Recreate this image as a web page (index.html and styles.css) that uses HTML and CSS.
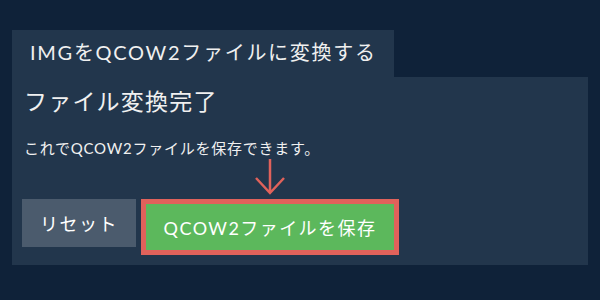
FILE: index.html
```html
<!DOCTYPE html>
<html lang="ja">
<head>
    <meta charset="utf-8">
    <title>IMGをQCOW2ファイルに変換する</title>
    <link rel="stylesheet" href="styles.css">
</head>
<body>
    <div class="converter">
        <div class="tab">IMGをQCOW2ファイルに変換する</div>
        <div class="panel">
            <h2 class="title">ファイル変換完了</h2>
            <p class="message">これでQCOW2ファイルを保存できます。</p>
            <div class="actions">
                <button class="btn reset">リセット</button>
                <div class="save-wrap">
                    <svg class="arrow" width="30" height="38" viewBox="0 0 30 38">
                        <path d="M15 1 V35 M1 20 L15 35 L29 20" fill="none" stroke="#e0625b" stroke-width="2.5"/>
                    </svg>
                    <button class="btn save">QCOW2ファイルを保存</button>
                </div>
            </div>
        </div>
    </div>
</body>
</html>
```

FILE: styles.css
```css
* {
    margin: 0;
    padding: 0;
    box-sizing: border-box;
}

body {
    background-color: #0f2239;
    color: #f0f0f0;
    font-family: Lato, "Noto Sans CJK JP", sans-serif;
    letter-spacing: 0.075em;
    padding: 30px 12px;
}

.tab {
    display: inline-block;
    background-color: #22364c;
    font-size: 20px;
    line-height: 28px;
    letter-spacing: 0.085em;
    padding: 8px 17px 11px 18px;
}

.panel {
    background-color: #22364c;
    padding: 10px 10px 10px 10px;
}

.title {
    font-size: 23px;
    font-weight: normal;
    line-height: 29px;
    margin-left: 2px;
    margin-bottom: 22px;
}

.message {
    font-size: 15px;
    line-height: 21px;
    letter-spacing: 0.05em;
    margin-left: 2px;
    margin-bottom: 40px;
}

.actions {
    display: flex;
    align-items: flex-start;
    gap: 5px;
}

.btn {
    border: none;
    font-family: inherit;
    font-size: 18px;
    letter-spacing: 0.08em;
    color: #ffffff;
    cursor: pointer;
}

.reset {
    width: 114px;
    height: 48px;
    background-color: #4b5b6d;
}

.save-wrap {
    position: relative;
}

.arrow {
    position: absolute;
    left: 114px;
    bottom: 59px;
}

.save {
    width: 258px;
    height: 56px;
    background-color: #5cb85c;
    border: 5px solid #e0625b;
}
```
